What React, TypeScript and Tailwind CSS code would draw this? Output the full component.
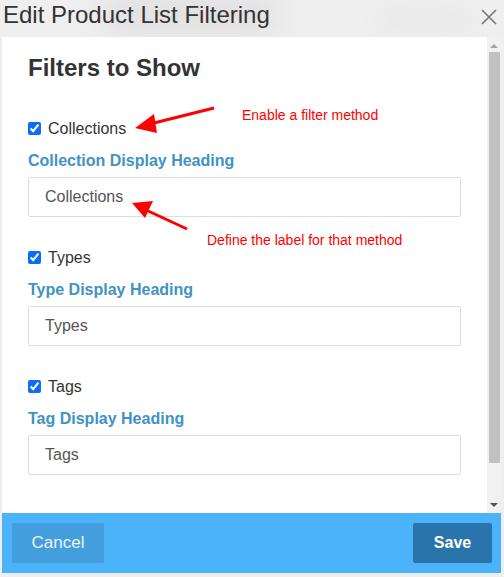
import React from "react";

const font = { fontFamily: '"Liberation Sans", Arial, sans-serif' };

function FilterBlock({ label, heading, value }: { label: string; heading: string; value: string }) {
  return (
    <div className="flex flex-col">
      <label className="flex items-center gap-[7px] h-[20px] text-[16px] text-[#333]">
        <input type="checkbox" defaultChecked className="w-[13px] h-[13px] m-0 accent-[#0b6cf5]" />
        <span className="relative top-[1px]">{label}</span>
      </label>
      <div className="mt-[12px] h-[20px] leading-[22px] text-[16px] font-bold text-[#4192c5]">{heading}</div>
      <input
        defaultValue={value}
        className="mt-[7px] h-[40px] w-full border border-[#dddddd] rounded-[2px] pl-[16px] text-[16px] text-[#555] outline-none"
      />
    </div>
  );
}

export default function App() {
  return (
    <div className="relative w-[504px] h-[577px] bg-[#efefef] overflow-hidden flex flex-col" style={font}>
      <div className="absolute left-[100px] top-[-10px] w-[180px] h-[50px] rounded-full bg-[#e2e2e2] blur-[14px]" />
      <div className="absolute left-[380px] top-[8px] w-[90px] h-[24px] rounded-full bg-[#e9e9e9] blur-[10px]" />

      <div className="relative h-[37px] flex items-start justify-between pl-[3px] pr-[6px]">
        <h1 className="text-[24px] leading-[30px] text-[#333]">Edit Product List Filtering</h1>
        <svg width="18" height="18" viewBox="0 0 18 18" className="mt-[8px]">
          <path d="M2 2L16 16M16 2L2 16" stroke="#777" strokeWidth="1.6" />
        </svg>
      </div>

      <div className="relative flex mx-[2px] mr-[3px] h-[476px]">
        <div className="relative flex-1 bg-white pt-[18px] pl-[26px] pr-[26px]">
          <h2 className="text-[24px] leading-[26px] font-bold text-[#333]">Filters to Show</h2>
          <div className="mt-[37px] flex flex-col gap-[30px]">
            <FilterBlock label="Collections" heading="Collection Display Heading" value="Collections" />
            <FilterBlock label="Types" heading="Type Display Heading" value="Types" />
            <FilterBlock label="Tags" heading="Tag Display Heading" value="Tags" />
          </div>

          <span className="absolute left-[240px] top-[68px] text-[14px] text-[#ff0000]">Enable a filter method</span>
          <span className="absolute left-[205px] top-[193px] text-[14px] text-[#ff0000]">Define the label for that method</span>
          <svg className="absolute left-0 top-0 pointer-events-none" width="485" height="476">
            <line x1="212" y1="71" x2="148" y2="87" stroke="#ff0000" strokeWidth="3" />
            <polygon points="133,91 152,77 155,96" fill="#ff0000" />
            <line x1="185" y1="192" x2="144" y2="173" stroke="#ff0000" strokeWidth="3" />
            <polygon points="130,166 151,164 143,181" fill="#ff0000" />
          </svg>
        </div>
        <div className="w-[14px] bg-[#f1f1f1] flex flex-col items-center">
          <svg width="10" height="10" viewBox="0 0 10 10" className="mt-[4px]">
            <polygon points="1,7 9,7 5,3" fill="#a3a3a3" />
          </svg>
          <div className="mt-[1px] w-[11px] h-[411px] bg-[#c1c1c1]" />
          <svg width="10" height="10" viewBox="0 0 10 10" className="mt-auto mb-[3px]">
            <polygon points="1,3 9,3 5,7" fill="#505050" />
          </svg>
        </div>
      </div>

      <div className="mx-[2px] mr-[3px] h-[60px] bg-[#4bb3fa] flex items-center justify-between pl-[10px] pr-[9px]">
        <button className="w-[92px] h-[40px] rounded-[2px] bg-[#439ede] text-[17px] text-[#eaf4fb]">Cancel</button>
        <button className="w-[79px] h-[40px] rounded-[2px] bg-[#2a74ac] text-[16px] font-bold text-white">Save</button>
      </div>
    </div>
  );
}
